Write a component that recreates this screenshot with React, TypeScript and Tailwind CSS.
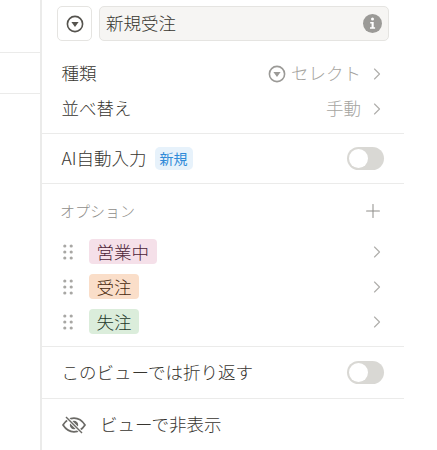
import { ChevronRight, Plus } from "lucide-react"

const options = [
  { label: "営業中", className: "bg-[#f5e0e9] text-[#4c2337]" },
  { label: "受注", className: "bg-[#fadec9] text-[#49290e]" },
  { label: "失注", className: "bg-[#dbeddb] text-[#1c3829]" },
]

function SelectIcon({ size = 18 }: { size?: number }) {
  return (
    <svg width={size} height={size} viewBox="0 0 18 18" fill="none">
      <circle cx="9" cy="9" r="7.6" stroke="currentColor" strokeWidth="1.6" />
      <path d="M5.400 7h7.200L9 12z" fill="currentColor" />
    </svg>
  )
}

function Toggle() {
  return (
    <div className="flex h-[23px] w-[37px] items-center rounded-full bg-[#d9d8d4] pl-[2px]">
      <div className="h-[19px] w-[19px] rounded-full bg-white" />
    </div>
  )
}

function DragDots() {
  return (
    <svg width="10" height="16" viewBox="0 0 10 16" fill="#a8a7a4">
      {[2, 8, 14].map((y) => (
        <g key={y}>
          <circle cx="1.8" cy={y} r="1.6" />
          <circle cx="8.2" cy={y} r="1.6" />
        </g>
      ))}
    </svg>
  )
}

function Chevron({ className = "" }: { className?: string }) {
  return <ChevronRight size={20} strokeWidth={1.4} className={`text-[#b0afac] ${className}`} />
}

export default function App() {
  return (
    <div
      className="flex h-[450px] w-[437px] overflow-hidden bg-white text-[17.5px] text-[#37352f]"
      style={{ fontFamily: '"Noto Sans CJK JP", sans-serif' }}
    >
      {/* left edge of the table behind the panel */}
      <div className="w-[42px] shrink-0 border-r-2 border-[#ebebea]">
        <div className="h-[53px] border-b border-[#ebebea]" />
        <div className="h-[41px] border-b border-[#ebebea]" />
      </div>

      <div className="w-[362px] shrink-0 font-light">
        <div className="flex items-center gap-[7px] px-[15px] pt-[6px]">
          <div className="flex h-[35px] w-[35px] shrink-0 items-center justify-center rounded-[5px] border border-[#e5e4e1] text-[#55534e]">
            <SelectIcon />
          </div>
          <div className="flex h-[35px] flex-1 items-center justify-between rounded-[5px] border border-[#e5e4e1] bg-[#f6f5f3] pl-[6px] pr-[6px]">
            <span>新規受注</span>
            <svg width="19" height="19" viewBox="0 0 19 19">
              <circle cx="9.5" cy="9.5" r="9.5" fill="#9b9a97" />
              <circle cx="9.5" cy="5" r="1.5" fill="#fff" />
              <path d="M7.200 8h3.500v5.200h1.400v1.500H7v-1.500h1.600V9.500H7.200z" fill="#fff" />
            </svg>
          </div>
        </div>

        <div className="border-b border-[#ebebea] pb-[7px] pt-[15px]">
          <div className="flex h-[35px] items-center justify-between pl-[19.5px] pr-[17px]">
            <span>種類</span>
            <span className="flex items-center text-[#a5a4a0]">
              <span className="text-[#9b9a97]">
                <SelectIcon />
              </span>
              <span className="ml-[5px]">セレクト</span>
              <Chevron className="ml-[6px]" />
            </span>
          </div>
          <div className="flex h-[35px] items-center justify-between pl-[19.5px] pr-[17px]">
            <span>並べ替え</span>
            <span className="flex items-center text-[#a5a4a0]">
              手動
              <Chevron className="ml-[6px]" />
            </span>
          </div>
        </div>

        <div className="flex h-[50px] items-center justify-between border-b border-[#ebebea] pl-[19.5px] pr-[20px]">
          <span className="flex items-center gap-[8px]">
            AI自動入力
            <span className="rounded-[5px] bg-[#e7f2fb] px-[5px] text-[14px] font-normal leading-[23px] text-[#2f8ad8]">
              新規
            </span>
          </span>
          <Toggle />
        </div>

        <div className="flex h-[50px] items-center justify-between pl-[18px] pr-[20px] pt-[4px] text-[15px] text-[#8f8e8a]">
          <span>オプション</span>
          <Plus size={22} strokeWidth={1.1} />
        </div>

        <div className="border-b border-[#ebebea] pb-[7px]">
          {options.map((o) => (
            <div key={o.label} className="flex h-[35px] items-center pl-[21px] pr-[17px]">
              <DragDots />
              <span className={`ml-[16px] rounded-[4px] px-[7.5px] leading-[25px] ${o.className}`}>
                {o.label}
              </span>
              <Chevron className="ml-auto" />
            </div>
          ))}
        </div>

        <div className="flex h-[52px] items-center justify-between border-b border-[#ebebea] pl-[19.5px] pr-[20px]">
          <span>このビューでは折り返す</span>
          <Toggle />
        </div>

        <div className="flex h-[51px] items-center pl-[20px]">
          <svg width="24" height="18" viewBox="0 0 24 18" fill="none" className="text-[#6b6a66]">
            <path d="M1 9c3-4.600 6.700-6.800 11-6.800S20 4.400 23 9c-3 4.600-6.700 6.800-11 6.800S4 13.600 1 9z" stroke="currentColor" strokeWidth="1.7" />
            <circle cx="12" cy="9" r="4.200" fill="currentColor" />
            <path d="M4.500 1.500l15 15" stroke="#fff" strokeWidth="3.200" />
            <path d="M4 1l16 16" stroke="currentColor" strokeWidth="1.500" />
          </svg>
          <span className="ml-[14px]">ビューで非表示</span>
        </div>
      </div>
    </div>
  )
}
